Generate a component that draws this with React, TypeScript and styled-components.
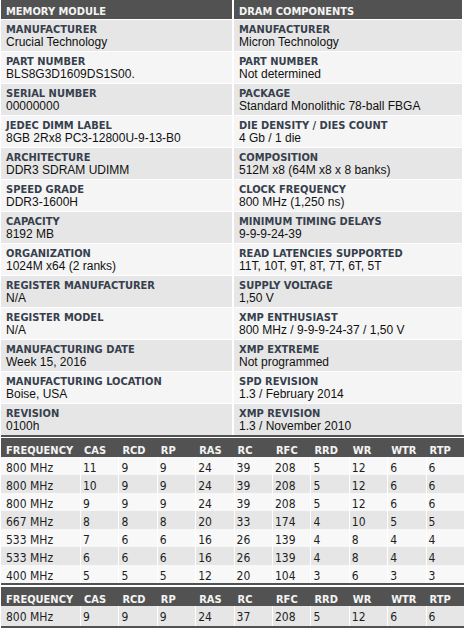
import React from "react";
import styled, { createGlobalStyle } from "styled-components";

const GlobalStyle = createGlobalStyle`
  html, body { margin: 0; padding: 0; background: #ffffff; }
  body { width: 464px; overflow: hidden; }
`;

const DARK = "#525252";
const ROW_DARK = "#e6e6e6";
const ROW_LIGHT = "#f5f5f5";
const LABEL_FONT = `"DejaVu Sans Condensed", "DejaVu Sans", Tahoma, sans-serif`;

const Page = styled.div`
  padding-left: 1px;
  width: 463px;
  display: flex;
  flex-direction: column;
`;

const SpecGrid = styled.div`
  width: 461px;
  display: grid;
  grid-template-columns: 231px 228px;
  column-gap: 2px;
  row-gap: 1px;
`;

const SectionHead = styled.div`
  box-sizing: border-box;
  height: 19px;
  background: ${DARK};
  color: #f4f4f4;
  font-family: ${LABEL_FONT};
  font-weight: bold;
  font-size: 11px;
  line-height: 13px;
  padding: 5px 5px 0;
  white-space: nowrap;
`;

const SpecCell = styled.div<{ $alt: boolean }>`
  box-sizing: border-box;
  height: 31px;
  padding: 4px 5px 0;
  background: ${(p) => (p.$alt ? ROW_LIGHT : ROW_DARK)};
  display: flex;
  flex-direction: column;
  overflow: hidden;
`;

const Label = styled.div`
  font-family: ${LABEL_FONT};
  font-weight: bold;
  font-size: 11px;
  line-height: 12px;
  color: #36404d;
  white-space: nowrap;
`;

const Value = styled.div`
  font-family: "Liberation Sans", Arial, sans-serif;
  font-size: 12px;
  line-height: 13px;
  color: #111111;
  white-space: nowrap;
`;

const Rule = styled.div`
  height: 2px;
  background: ${DARK};
`;

const TimingTable = styled.div<{ $gap: number }>`
  margin-top: ${(p) => p.$gap}px;
  display: flex;
  flex-direction: column;
  border-bottom: 2px solid ${DARK};
`;

const TimingRow = styled.div<{ $bg: string }>`
  display: grid;
  grid-template-columns: 79px repeat(10, 1fr);
  background: ${(p) => p.$bg};
`;

const HeadCell = styled.div`
  box-sizing: border-box;
  height: 19px;
  padding: 6px 0 0 3px;
  font-family: ${LABEL_FONT};
  font-weight: bold;
  font-size: 11px;
  line-height: 13px;
  color: #f4f4f4;
  white-space: nowrap;
  &:first-child { padding-left: 5px; }
  &:not(:first-child) { border-left: 1px solid transparent; }
`;

const DataCell = styled.div<{ $h: number }>`
  box-sizing: border-box;
  height: ${(p) => p.$h}px;
  padding: 4px 0 0 2px;
  font-family: ${LABEL_FONT};
  font-size: 12px;
  line-height: 14px;
  color: #1e1e1e;
  white-space: nowrap;
  &:first-child { padding-left: 5px; }
  &:not(:first-child) { border-left: 1px solid #ffffff; }
`;

const left: [string, string][] = [
  ["MANUFACTURER", "Crucial Technology"],
  ["PART NUMBER", "BLS8G3D1609DS1S00."],
  ["SERIAL NUMBER", "00000000"],
  ["JEDEC DIMM LABEL", "8GB 2Rx8 PC3-12800U-9-13-B0"],
  ["ARCHITECTURE", "DDR3 SDRAM UDIMM"],
  ["SPEED GRADE", "DDR3-1600H"],
  ["CAPACITY", "8192 MB"],
  ["ORGANIZATION", "1024M x64 (2 ranks)"],
  ["REGISTER MANUFACTURER", "N/A"],
  ["REGISTER MODEL", "N/A"],
  ["MANUFACTURING DATE", "Week 15, 2016"],
  ["MANUFACTURING LOCATION", "Boise, USA"],
  ["REVISION", "0100h"],
];

const right: [string, string][] = [
  ["MANUFACTURER", "Micron Technology"],
  ["PART NUMBER", "Not determined"],
  ["PACKAGE", "Standard Monolithic 78-ball FBGA"],
  ["DIE DENSITY / DIES COUNT", "4 Gb / 1 die"],
  ["COMPOSITION", "512M x8 (64M x8 x 8 banks)"],
  ["CLOCK FREQUENCY", "800 MHz (1,250 ns)"],
  ["MINIMUM TIMING DELAYS", "9-9-9-24-39"],
  ["READ LATENCIES SUPPORTED", "11T, 10T, 9T, 8T, 7T, 6T, 5T"],
  ["SUPPLY VOLTAGE", "1,50 V"],
  ["XMP ENTHUSIAST", "800 MHz / 9-9-9-24-37 / 1,50 V"],
  ["XMP EXTREME", "Not programmed"],
  ["SPD REVISION", "1.3 / February 2014"],
  ["XMP REVISION", "1.3 / November 2010"],
];

const heads = ["FREQUENCY", "CAS", "RCD", "RP", "RAS", "RC", "RFC", "RRD", "WR", "WTR", "RTP"];

const jedec: string[][] = [
  ["800 MHz", "11", "9", "9", "24", "39", "208", "5", "12", "6", "6"],
  ["800 MHz", "10", "9", "9", "24", "39", "208", "5", "12", "6", "6"],
  ["800 MHz", "9", "9", "9", "24", "39", "208", "5", "12", "6", "6"],
  ["667 MHz", "8", "8", "8", "20", "33", "174", "4", "10", "5", "5"],
  ["533 MHz", "7", "6", "6", "16", "26", "139", "4", "8", "4", "4"],
  ["533 MHz", "6", "6", "6", "16", "26", "139", "4", "8", "4", "4"],
  ["400 MHz", "5", "5", "5", "12", "20", "104", "3", "6", "3", "3"],
];

const xmp: string[][] = [["800 MHz", "9", "9", "9", "24", "37", "208", "5", "12", "6", "6"]];

function Timings({
  rows,
  gap,
  firstLight,
  rowH,
}: {
  rows: string[][];
  gap: number;
  firstLight: boolean;
  rowH: number;
}) {
  return (
    <TimingTable $gap={gap}>
      <TimingRow $bg={DARK}>
        {heads.map((h) => (
          <HeadCell key={h}>{h}</HeadCell>
        ))}
      </TimingRow>
      {rows.map((r, i) => (
        <TimingRow key={i} $bg={(i % 2 === 0) === firstLight ? "#f8f8f8" : ROW_DARK}>
          {r.map((c, j) => (
            <DataCell key={j} $h={rowH}>
              {c}
            </DataCell>
          ))}
        </TimingRow>
      ))}
    </TimingTable>
  );
}

export default function App() {
  return (
    <>
      <GlobalStyle />
      <Page>
        <SpecGrid>
          <SectionHead>MEMORY MODULE</SectionHead>
          <SectionHead>DRAM COMPONENTS</SectionHead>
          {left.map((l, i) => (
            <React.Fragment key={i}>
              <SpecCell $alt={i % 2 === 1}>
                <Label>{l[0]}</Label>
                <Value>{l[1]}</Value>
              </SpecCell>
              <SpecCell $alt={i % 2 === 1}>
                <Label>{right[i][0]}</Label>
                <Value>{right[i][1]}</Value>
              </SpecCell>
            </React.Fragment>
          ))}
        </SpecGrid>
        <Rule />
        <Timings rows={jedec} gap={1} firstLight={true} rowH={18} />
        <Timings rows={xmp} gap={2} firstLight={false} rowH={20} />
      </Page>
    </>
  );
}
